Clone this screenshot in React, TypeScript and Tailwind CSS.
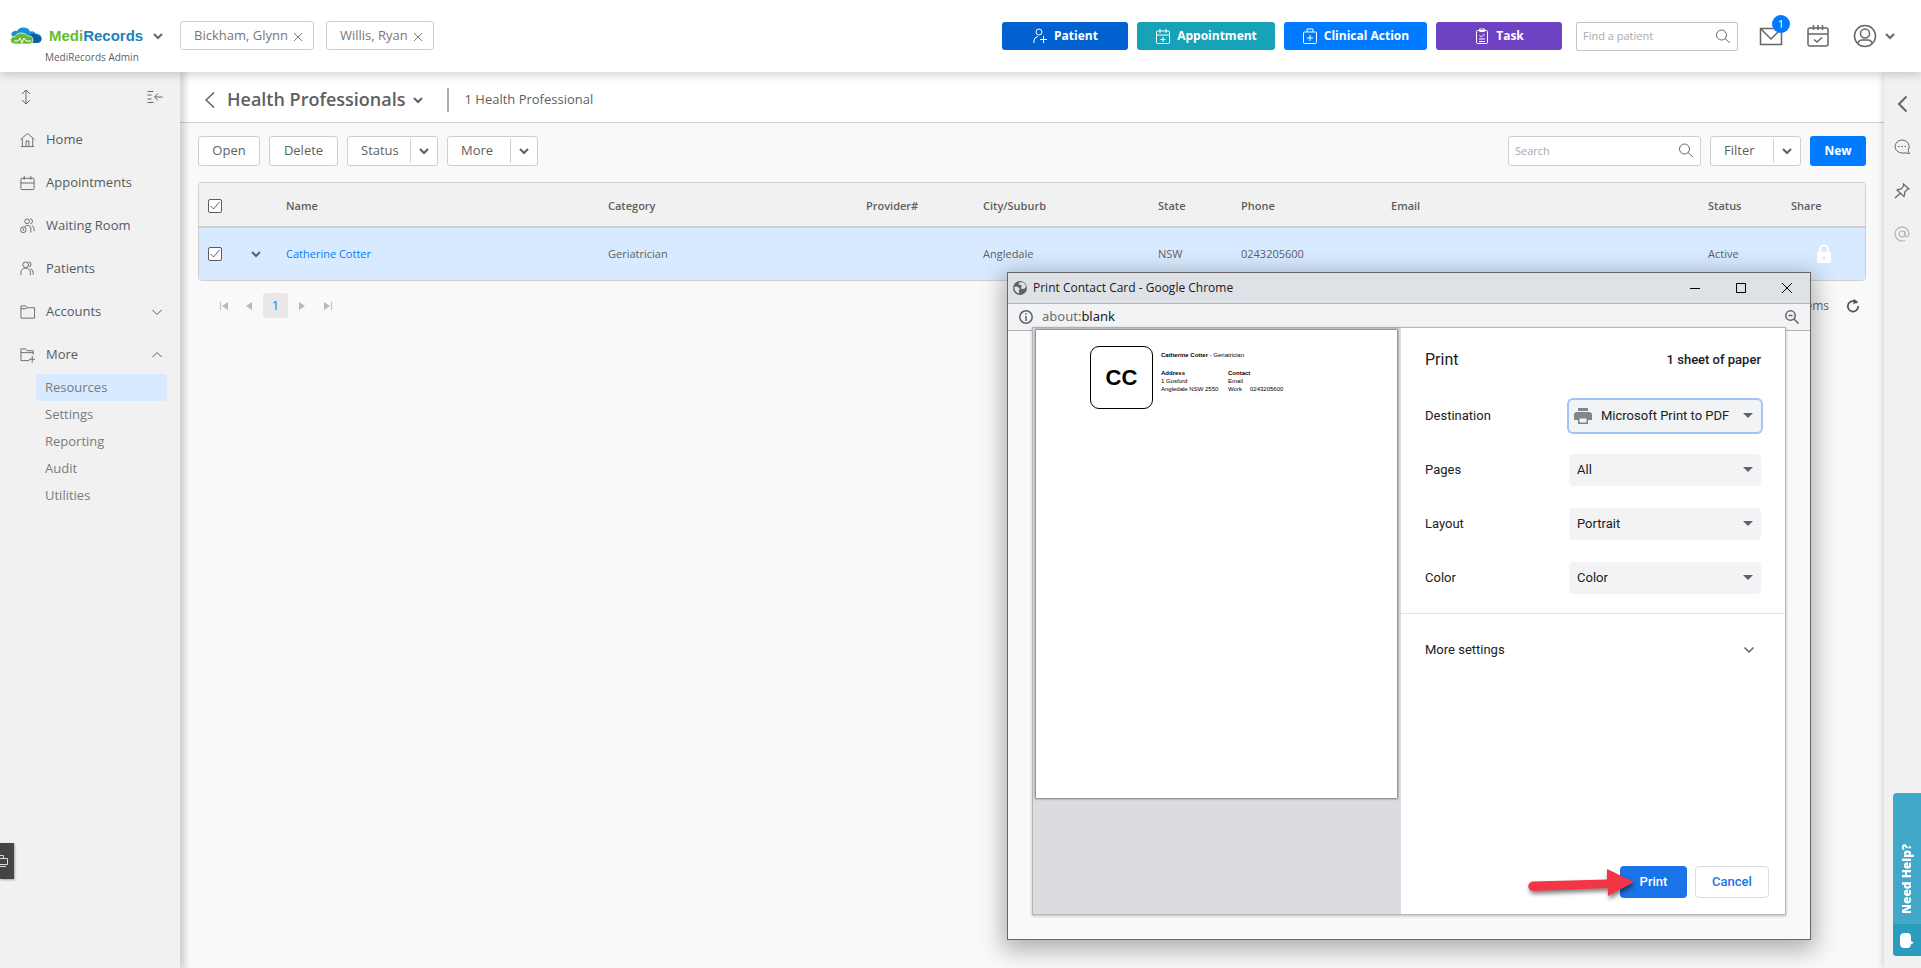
import { useState, type ReactNode } from 'react'

// Generic line icon, every path is drawn on the given square view box
function Icon({ size, box = 24, width = 1.5, className = '', children }: {
  size: number
  box?: number
  width?: number
  className?: string
  children: ReactNode
}) {
  return (
    <svg
      width={size}
      height={size}
      viewBox={`0 0 ${box} ${box}`}
      fill="none"
      stroke="currentColor"
      strokeWidth={width}
      className={`shrink-0 ${className}`}
      aria-hidden="true"
    >
      {children}
    </svg>
  )
}

// Thick chevron used in split buttons and menus
function Caret({ className = '' }: { className?: string }) {
  return (
    <Icon size={10} box={10} width={2} className={className}>
      <path d="M1 3l4 4 4-4" />
    </Icon>
  )
}

function SearchIcon({ className = '' }: { className?: string }) {
  return (
    <Icon size={16} box={16} width={1} className={className}>
      <circle cx="6.5" cy="6" r="5" />
      <path d="M10 9.500l5 4.500" />
    </Icon>
  )
}

const PEOPLE = (
  <>
    <circle cx="6" cy="4" r="3" />
    <path d="M1 15v-3a5 4.500 0 0 1 10 0v3" />
    <path d="M9 1a2.500 2.500 0 1 1 .5 5M11 8.500q3 .5 3 4v2" />
  </>
)

const NAV: { label: string; icon: ReactNode; open?: boolean }[] = [
  {
    label: 'Home',
    icon: <path d="M.5 8L8 1.500 15.500 8M2.500 7v8.500M13.500 7v8.500M1 15.500h14M6.500 15V9.500h3V15" />,
  },
  {
    label: 'Appointments',
    icon: (
      <>
        <rect x="1" y="3.500" width="14" height="12" rx="1" />
        <path d="M1 8.500h14M4.500 1v4M11.500 1v4" />
      </>
    ),
  },
  {
    label: 'Waiting Room',
    icon: (
      <>
        <circle cx="7.500" cy="3.500" r="2.500" />
        <path d="M10.500 1a2.500 2.500 0 0 1 .5 5M5 9q5-3 6.500 1.500v5M12.500 8q2.500 1 2.500 4v2" />
        <circle cx="3.500" cy="12.500" r="3" />
        <path d="M3.500 11v2l1 .5" />
      </>
    ),
  },
  { label: 'Patients', icon: PEOPLE },
  { label: 'Accounts', icon: <path d="M1 15V2h5l1.500 2H15.500v11zM1 5h6" />, open: false },
  { label: 'More', icon: <path d="M10 14.500H1V2h5l1.500 2H14v4M1 6h13M13 9.500v7M9.500 13H16" />, open: true },
]

const SUBNAV = ['Resources', 'Settings', 'Reporting', 'Audit', 'Utilities']

const ACTIONS = [
  {
    label: 'Patient',
    className: 'bg-[#0061cf] w-[126px]',
    icon: (
      <>
        <circle cx="7" cy="4" r="3" />
        <path d="M2 15v-2q0-4 4-4.500M11.500 8v7M8 11.500h7" />
      </>
    ),
  },
  {
    label: 'Appointment',
    className: 'bg-[#18a2b8] w-[138px]',
    icon: (
      <>
        <rect x="1.500" y="3" width="13" height="12.500" rx="1" />
        <path d="M1.500 7h13M5 1v4M11 1v4M8 9v5M5.500 11.500h5" />
      </>
    ),
  },
  {
    label: 'Clinical Action',
    className: 'bg-[#007bff] w-[143px]',
    icon: (
      <>
        <rect x="1.500" y="4" width="13" height="11.500" rx="1" />
        <path d="M5 4V1h6v3M8 7v6M5 10h6" />
      </>
    ),
  },
  {
    label: 'Task',
    className: 'bg-[#6f42c1] w-[126px]',
    icon: (
      <>
        <rect x="2.500" y="2.500" width="11" height="13" rx="1" />
        <path d="M5.500 1h5v2.500h-5zM5.500 7.500l2 1.500 3-3M5 11h6M5 13.500h6" />
      </>
    ),
  },
]

const COLUMNS = [
  { label: 'Name', className: 'w-[322px]' },
  { label: 'Category', className: 'w-[258px]' },
  { label: 'Provider#', className: 'w-[117px]' },
  { label: 'City/Suburb', className: 'w-[175px]' },
  { label: 'State', className: 'w-[83px]' },
  { label: 'Phone', className: 'w-[150px]' },
  { label: 'Email', className: '' },
  { label: 'Status', className: 'w-[83px]' },
  { label: 'Share', className: 'w-[82px]' },
]

const TOOL_BUTTON = 'flex h-[30px] items-center justify-center rounded-[3px] border border-[#cfcfcf] bg-white text-[13px] font-medium text-[#5f5f5f]'

function SplitButton({ label }: { label: string }) {
  return (
    <div className={TOOL_BUTTON}>
      <button className="w-[62px] pl-[13px] text-left">{label}</button>
      <button aria-label={`${label} options`} className="flex h-[24px] items-center border-l border-[#cfcfcf] px-2">
        <Caret />
      </button>
    </div>
  )
}

function Checkbox({ label }: { label: string }) {
  return (
    <span className="relative block size-[14px]">
      <input
        type="checkbox"
        defaultChecked
        aria-label={label}
        className="peer block size-[14px] appearance-none rounded-[2px] border border-[#5c5c5c] bg-white"
      />
      <Icon size={10} box={10} width={1} className="pointer-events-none absolute left-[2px] top-[2px] hidden text-[#666] peer-checked:block">
        <path d="M.5 5l3 3L9.500 1" />
      </Icon>
    </span>
  )
}

function Header() {
  return (
    <header className="relative z-20 flex h-[72px] shrink-0 items-start bg-white pl-[9px] pr-[26px] shadow-[0_2px_10px_rgba(0,0,0,0.2)]">
      <div className="w-[171px] shrink-0 pt-[25px]">
        <button className="flex h-[22px] items-center" aria-label="MediRecords menu">
          <svg width="34" height="20" viewBox="0 0 34 20" aria-hidden="true">
            <path d="M5 11Q1 10 3 6.500 5 4 8 5q2-4 7-3.500 5 .5 6 4 4-1 5.500 2 6 .5 6 5 0 4-5 4.500H12z" fill="#1592d2" />
            <path d="M20 9q5-3 8 0 5 1 4.500 4.500T27 17h-7z" fill="#0e5fa0" />
            <path d="M6 18q-5-.5-4.500-4.500Q2 10 6 10.500 8 6.500 13 7q4 .5 5.500 3 5-1 5.500 4 0 4-4 4z" fill="#65bb2e" stroke="#fff" strokeWidth=".7" />
            <path d="M5 15h4l2-3 2 5 2-5 2 3h5" fill="none" stroke="#fff" />
          </svg>
          <span className="ml-[6px] font-['Liberation_Sans',sans-serif] text-[15px] font-bold text-[#65bb2e]">
            Medi<span className="text-[#1b82bd]">Records</span>
          </span>
          <Caret className="ml-[10px] text-[#666]" />
        </button>
        <div className="pl-[36px] text-[10px] font-medium leading-[20px] text-[#5f5f5f]">MediRecords Admin</div>
      </div>

      {/* Open patient tabs */}
      <div className="flex gap-3 pt-[21px]">
        {['Bickham, Glynn', 'Willis, Ryan'].map(name => (
          <div key={name} className="flex h-[29px] items-center rounded-[3px] border border-[#cfcfcf] pl-[13px] pr-[10px] text-[13px] text-[#777]">
            {name}
            <button aria-label={`Close ${name}`} className="ml-[5px]">
              <Icon size={10} box={10} width={1} className="mt-[2px]">
                <path d="M1 1l8 8M9 1L1 9" />
              </Icon>
            </button>
          </div>
        ))}
      </div>

      <div className="ml-auto flex items-center gap-[9px] pt-[22px]">
        {ACTIONS.map(action => (
          <button
            key={action.label}
            className={`flex h-[28px] items-center justify-center gap-[6px] rounded-[3px] text-[12px] font-bold text-white ${action.className}`}
          >
            <Icon size={16} box={16} width={1}>{action.icon}</Icon>
            {action.label}
          </button>
        ))}
      </div>

      <div className="ml-[14px] mt-[22px] flex h-[29px] w-[162px] items-center rounded-[2px] border border-[#c4c4c4] px-[6px]">
        <input aria-label="Find a patient" placeholder="Find a patient" className="min-w-0 flex-1 text-[11px] outline-none placeholder:text-[#aaa]" />
        <SearchIcon className="text-[#666]" />
      </div>

      <div className="flex items-center pl-[21px] pt-[24px] text-[#666]">
        <button aria-label="Messages, 1 unread" className="relative">
          <Icon size={24} width={1.5}>
            <path d="M1.500 4.500h21v16h-21zM2 5l10 10L22 5" />
          </Icon>
          <span className="absolute left-[13px] top-[-9px] flex size-[18px] items-center justify-center rounded-full bg-[#007bff] text-[11px] text-white">1</span>
        </button>
        <button aria-label="Calendar" className="ml-[23px]">
          <Icon size={24} width={1.5}>
            <rect x="2" y="4" width="20" height="18" rx="2" />
            <path d="M2 10h20M7.500 1v5M12 1v5M16.500 1v5M8 15.500l3 2.500 5-4.500" />
          </Icon>
        </button>
        <button aria-label="Account" className="ml-[23px] flex items-center gap-2">
          <Icon size={24} width={1.5}>
            <circle cx="12" cy="12" r="10.500" />
            <circle cx="12" cy="9.500" r="4.500" />
            <path d="M5 19q1-3 4-3h6q3 0 4 3" />
          </Icon>
          <Caret />
        </button>
      </div>
    </header>
  )
}

function Sidebar() {
  return (
    <nav className="relative z-10 w-[180px] shrink-0 bg-[#f1f1f1] shadow-[3px_0_6px_2px_rgba(0,0,0,0.16)]">
      <div className="flex h-[46px] items-center justify-between pl-[18px] pr-[17px] pt-[4px] text-[#666]">
        <button aria-label="Resize">
          <Icon size={16} box={16} width={1}>
            <path d="M8 1.500v13M4 5l4-4 4 4M4 11l4 4 4-4" />
          </Icon>
        </button>
        <button aria-label="Collapse menu">
          <Icon size={16} box={16} width={1}>
            <path d="M.5 2.500h6M.5 6h4M.5 10h4M.5 13.500h6M15.500 8H8M11 4.500L7.500 8l3.500 3.500" />
          </Icon>
        </button>
      </div>

      {NAV.map(item => (
        <a key={item.label} href="#" className="flex h-[43px] items-center pl-[20px] pr-[18px] text-[13px] font-medium text-[#555b61]">
          <Icon size={16} box={17} width={1} className="mr-[10px] text-[#666]">{item.icon}</Icon>
          {item.label}
          {item.open !== undefined && (
            <Icon size={10} box={10} width={1} className="ml-auto">
              <path d={item.open ? 'M.5 7L5 2.500 9.500 7' : 'M.5 3L5 7.500 9.500 3'} />
            </Icon>
          )}
        </a>
      ))}

      <ul className="-mt-[2px] pl-[36px] pr-[13px]">
        {SUBNAV.map(label => (
          <li key={label}>
            <a
              href="#"
              className={`block h-[27px] rounded-[3px] pl-[9px] text-[13px] font-medium leading-[27px] text-[#7b7b7b] ${
                label === 'Resources' ? 'bg-[#d8eaff]' : ''
              }`}
            >
              {label}
            </a>
          </li>
        ))}
      </ul>

      {/* Dock tab on the window edge */}
      <button aria-label="Dock" className="absolute left-0 top-[771px] flex h-[36px] w-[14px] items-center bg-[#444] text-[#ddd] shadow-[1px_1px_2px_rgba(0,0,0,0.3)]">
        <svg width="9" height="14" viewBox="0 0 9 14" fill="none" stroke="currentColor" aria-hidden="true">
          <path d="M0 1.500h3.500V4M0 4.500h7.500v6H0M0 12.500h6" />
        </svg>
      </button>
    </nav>
  )
}

function Toolbar() {
  return (
    <div className="flex items-center pt-[13px] pl-[18px] pr-[18px]">
      <div className="flex gap-[9px]">
        <button className={`${TOOL_BUTTON} w-[62px]`}>Open</button>
        <button className={`${TOOL_BUTTON} w-[69px]`}>Delete</button>
        <SplitButton label="Status" />
        <SplitButton label="More" />
      </div>
      <div className="ml-auto flex gap-[9px]">
        <div className="flex h-[30px] w-[193px] items-center rounded-[3px] border border-[#cfcfcf] bg-white px-[6px]">
          <input aria-label="Search" placeholder="Search" className="min-w-0 flex-1 text-[11px] outline-none placeholder:text-[#aaa]" />
          <SearchIcon className="text-[#666]" />
        </div>
        <SplitButton label="Filter" />
        <button className="h-[30px] w-[56px] rounded-[3px] bg-[#007bff] text-[12px] font-bold text-white">New</button>
      </div>
    </div>
  )
}

function ProfessionalsTable() {
  return (
    <div className="mx-[18px] mt-[16px] overflow-hidden rounded-[4px] border border-[#cfcfcf]">
      <table className="w-full table-fixed border-collapse text-left text-[11px] text-[#5f5f5f]">
        <thead>
          <tr className="h-[44px] border-b-2 border-[#cfcfcf] bg-[#f1f1f1]">
            <th className="w-[43px] pl-[9px] pt-[3px]"><Checkbox label="Select all" /></th>
            <th className="w-[36px]" aria-label="Expand" />
            {COLUMNS.map(col => (
              <th key={col.label} className={`px-2 pt-[3px] font-semibold ${col.className}`}>{col.label}</th>
            ))}
          </tr>
        </thead>
        <tbody>
          <tr className="h-[53px] bg-[#d8eaff] font-medium">
            <td className="pl-[9px]"><Checkbox label="Select Catherine Cotter" /></td>
            <td className="pl-[9px]">
              <button aria-label="Row menu" className="block"><Caret /></button>
            </td>
            <td className="px-2"><a href="#" className="text-[#007bff]">Catherine Cotter</a></td>
            <td className="px-2">Geriatrician</td>
            <td />
            <td className="px-2">Angledale</td>
            <td className="px-2">NSW</td>
            <td className="px-2">0243205600</td>
            <td />
            <td className="px-2">Active</td>
            <td>
              <svg width="16" height="20" viewBox="0 0 16 20" className="mx-auto text-white" aria-label="Locked">
                <path d="M4 9V5.500a4 4 0 0 1 8 0V9" fill="none" stroke="currentColor" strokeWidth="2" />
                <path fillRule="evenodd" fill="currentColor" d="M2 8h12a1 1 0 0 1 1 1v9a1 1 0 0 1-1 1H2a1 1 0 0 1-1-1V9a1 1 0 0 1 1-1zm6 4a1.500 1.500 0 0 0-.7 2.700V16h1.400v-1.300A1.500 1.500 0 0 0 8 12z" />
              </svg>
            </td>
          </tr>
        </tbody>
      </table>
    </div>
  )
}

function Pager() {
  return (
    <div className="flex items-center pl-[35px] pr-[24px] pt-[12px] text-[#b9b9b9]">
      <button aria-label="First page" className="flex w-[17px] justify-center">
        <svg width="8" height="8" viewBox="0 0 8 8" fill="currentColor" aria-hidden="true"><path d="M0 0h1v8H0zM8 0v8L2 4z" /></svg>
      </button>
      <button aria-label="Previous page" className="ml-[8px] flex w-[18px] justify-center">
        <svg width="6" height="8" viewBox="0 0 6 8" fill="currentColor" aria-hidden="true"><path d="M6 0v8L0 4z" /></svg>
      </button>
      <button className="ml-[5px] size-[25px] rounded-[3px] bg-[#e9e7e8] text-[13px] text-[#1a73ff]">1</button>
      <button aria-label="Next page" className="ml-[5px] flex w-[18px] justify-center">
        <svg width="6" height="8" viewBox="0 0 6 8" fill="currentColor" aria-hidden="true"><path d="M0 0v8l6-4z" /></svg>
      </button>
      <button aria-label="Last page" className="ml-[8px] flex w-[17px] justify-center">
        <svg width="8" height="8" viewBox="0 0 8 8" fill="currentColor" aria-hidden="true"><path d="M7 0h1v8H7zM0 0v8l6-4z" /></svg>
      </button>
      <span className="ml-auto text-[12px] text-[#666]">1 - 1 of 1 items</span>
      <button aria-label="Refresh" className="ml-[17px] text-[#555]">
        <Icon size={14} box={14} width={1.7}>
          <path d="M11 4a5.200 5.200 0 1 0 1.200 3" />
          <path d="M7.500 0l4.500 2.500-4.500 3z" fill="currentColor" stroke="none" />
        </Icon>
      </button>
    </div>
  )
}

function RightRail() {
  return (
    <aside className="relative z-10 flex w-[37px] shrink-0 flex-col items-center bg-[#f1f1f1] pr-[2px] pt-[23px] text-[#666] shadow-[-2px_0_6px_rgba(0,0,0,0.14)]">
      <button aria-label="Expand panel" className="flex h-[18px] items-center">
        <Icon size={18} box={18} width={2}><path d="M13.500 1.500L6 9l7.500 7.500" /></Icon>
      </button>
      <button aria-label="Chat" className="mt-[26px]">
        <Icon size={16} box={16} width={1}>
          <path d="M15.500 14.500l-1.500-3q1.500-2 1-5A7 6.500 0 1 0 8 14h4z" />
          <path d="M4 7.500h1.500M7.200 7.500h1.500M10.500 7.500h1.500" />
        </Icon>
      </button>
      <button aria-label="Pinned" className="mt-[28px]">
        <Icon size={16} box={16} width={1.2}>
          <path d="M9.500 1l5.500 5-2 .5-2.500 3q.5 2-.5 4L3 7q2-1.200 4-.8L9.500 3zM6 10.500L1 15" />
        </Icon>
      </button>
      <button aria-label="Mentions" className="mt-[27px] text-[#b5b5b5]">
        <Icon size={16} box={16} width={1.2}>
          <circle cx="8" cy="8" r="3" />
          <path d="M11 5v4.500q0 1.500 1.500 1.500T15 8a7 7 0 1 0-4 6.300" />
        </Icon>
      </button>

      <button className="absolute right-0 top-[721px] flex h-[163px] w-[28px] flex-col overflow-hidden rounded-l-[4px] bg-[#41a8c9] text-white">
        <span className="flex w-full flex-1 rotate-180 items-center pb-[8px] text-[12px] font-extrabold [writing-mode:vertical-rl]">
          <span className="mt-[10px]">Need Help?</span>
        </span>
        <span className="flex h-[32px] w-full items-center justify-center bg-[#2c9cbc]">
          <svg width="14" height="15" viewBox="0 0 14 15" fill="currentColor" aria-hidden="true">
            <path d="M4.500 0h3Q11 0 11 4v4l3 2-3 1q0 4-3.500 4h-3Q0 15 0 10.500v-6Q0 0 4.500 0z" />
          </svg>
        </span>
      </button>
    </aside>
  )
}

function PrintField({ id, label, options, printer = false }: {
  id: string
  label: string
  options: string[]
  printer?: boolean
}) {
  return (
    <div className="flex h-[54px] items-center justify-between">
      <label htmlFor={id}>{label}</label>
      <div className="relative">
        <select
          id={id}
          className={`block h-[32px] w-[192px] appearance-none rounded-[4px] bg-[#f1f3f4] pr-[24px] outline-none ${
            printer ? 'pl-[32px] ring-2 ring-[#a1c3f8]' : 'pl-[8px]'
          }`}
        >
          {options.map(option => <option key={option}>{option}</option>)}
        </select>
        {printer && (
          <svg width="18" height="16" viewBox="0 0 18 16" className="pointer-events-none absolute left-[5px] top-[8px]" fill="#80868b" aria-hidden="true">
            <path d="M4 0h10v3H4zM3 4h12q3 0 3 3v5h-4V9H4v3H0V7q0-3 3-3z" />
            <path d="M4 9h10v7H4zm1.500 1.500v4h7v-4z" fillRule="evenodd" />
          </svg>
        )}
        <svg width="10" height="5" viewBox="0 0 10 5" className="pointer-events-none absolute right-[8px] top-[13px]" fill="#5f6368" aria-hidden="true">
          <path d="M0 0h10L5 5z" />
        </svg>
      </div>
    </div>
  )
}

// The sheet of paper shown in the preview pane
function ContactSheet() {
  return (
    <div className="ml-[3px] mr-[4px] mt-[2px] flex h-[468px] items-start bg-white pl-[54px] pt-[16px] font-['Liberation_Sans',Arial,sans-serif] text-[6px] leading-[8px] text-black shadow-[0_0_2px_1px_rgba(0,0,0,0.45)]">
      <div className="flex size-[63px] items-center justify-center rounded-[9px] border border-black text-[22px] font-bold">CC</div>
      <div className="ml-[8px] mt-[5px]">
        <p><b>Catherine Cotter</b> - Geriatrician</p>
        <div className="mt-[10px] flex">
          <div className="w-[67px] whitespace-nowrap">
            <p className="font-bold">Address</p>
            <p>1 Gosford</p>
            <p>Angledale NSW 2550</p>
          </div>
          <div>
            <p className="font-bold">Contact</p>
            <p>Email</p>
            <p className="flex"><span className="w-[22px]">Work</span>0243205600</p>
          </div>
        </div>
      </div>
    </div>
  )
}

function PrintWindow({ onClose }: { onClose: () => void }) {
  return (
    <div
      role="dialog"
      aria-label="Print Contact Card"
      className="absolute right-[110px] top-[272px] z-30 flex h-[668px] w-[804px] flex-col border border-[#666] bg-[#f9f9f9] shadow-[0_6px_22px_4px_rgba(0,0,0,0.3)]"
    >
      {/* Window title */}
      <div className="flex h-[31px] shrink-0 items-center border-b border-[#b0b3b5] bg-[#dee1e6] pl-[5px] text-[12px] text-[#1a1a1a]">
        <svg width="14" height="14" viewBox="0 0 14 14" className="mr-[6px]" aria-hidden="true">
          <circle cx="7" cy="7" r="7" fill="#5f6368" />
          <path d="M6 1.500q-1 2 1 2.500 2.500 0 1.500 2-1 1.500 1 2 2.500 0 3.500-2 0-3-2.500-4.500Q8 1 6 1.500zM1.200 6q3-1 4.300.5 1.500 1 1 2-1 .5-.5 1.500.5 1.500-.5 2.500Q1.500 11 1.200 6z" fill="#dee1e6" />
        </svg>
        <span className="font-['Open_Sans',sans-serif]">Print Contact Card - Google Chrome</span>
        <div className="ml-auto flex pr-[18px] text-black">
          <button aria-label="Minimize"><Icon size={10} box={10} width={1}><path d="M0 5.500h10" /></Icon></button>
          <button aria-label="Maximize" className="ml-[36px]"><Icon size={10} box={10} width={1}><path d="M.5.5h9v9h-9z" /></Icon></button>
          <button aria-label="Close" className="ml-[36px]" onClick={onClose}><Icon size={10} box={10} width={1}><path d="M0 0l10 10M10 0L0 10" /></Icon></button>
        </div>
      </div>

      {/* Address bar */}
      <div className="flex h-[27px] shrink-0 items-center border-b border-[#b0b3b5] bg-[#f1f3f4] pl-[11px] pr-[11px] font-['Noto_Sans',sans-serif] text-[13px] text-[#202124]">
        <Icon size={14} box={14} width={1.500} className="mr-[9px] text-[#5f6368]">
          <circle cx="7" cy="7" r="6.200" />
          <path d="M7 3.200v1.500M7 6v5" />
        </Icon>
        <span><span className="text-[#6b6f73]">about:</span>blank</span>
        <Icon size={14} box={14} width={1.500} className="ml-auto text-[#5f6368]">
          <circle cx="5.500" cy="5.500" r="4.700" />
          <path d="M9 9l4.500 4.500M3.500 5.500h4" />
        </Icon>
      </div>

      {/* Print dialog overlaps the address bar */}
      <div className="absolute bottom-[24px] left-[24px] right-[24px] top-[54px] flex border border-[#b3b5b8] bg-white font-[Roboto,sans-serif] text-[13px] text-[#202124] shadow-[0_1px_3px_rgba(0,0,0,0.25)]">
        <div className="flow-root w-[368px] shrink-0 bg-[#dadce0]">
          <ContactSheet />
        </div>
        <div className="flex flex-1 flex-col">
          <div className="flex h-[61px] items-center justify-between px-[24px] pt-[3px]">
            <h2 className="text-[16px]">Print</h2>
            <span className="font-medium">1 sheet of paper</span>
          </div>
          <div className="px-[24px]">
            <PrintField id="destination" label="Destination" options={['Microsoft Print to PDF']} printer />
            <PrintField id="pages" label="Pages" options={['All']} />
            <PrintField id="layout" label="Layout" options={['Portrait', 'Landscape']} />
            <PrintField id="color" label="Color" options={['Color', 'Black and white']} />
          </div>
          <button className="mt-[8px] flex h-[73px] items-center justify-between border-t border-[#e3e3e3] px-[24px] text-left">
            More settings
            <Icon size={10} box={10} width={1.500} className="mr-[7px] text-[#5f6368]"><path d="M.5 2.500L5 7l4.500-4.500" /></Icon>
          </button>
          <div className="mt-auto flex justify-end gap-[8px] p-[16px] font-medium">
            <button className="relative h-[32px] w-[67px] rounded-[4px] bg-[#1a73e8] text-white">
              Print
              <svg width="112" height="36" viewBox="0 0 112 36" className="pointer-events-none absolute right-[53px] top-0 drop-shadow-[1px_3px_2px_rgba(0,0,0,0.5)]" aria-hidden="true">
                <path d="M11 15.500l74-2V3l27 13-26 14V22l-75 3a4.700 4.700 0 0 1 0-9.500z" fill="#f23645" />
              </svg>
            </button>
            <button className="h-[32px] w-[74px] rounded-[4px] border border-[#dadce0] text-[#1a73e8]">Cancel</button>
          </div>
        </div>
      </div>
    </div>
  )
}

export default function App() {
  const [printing, setPrinting] = useState(true)

  return (
    <div className="relative flex min-h-screen flex-col overflow-hidden bg-[#f9f9f9] font-['Open_Sans',sans-serif]">
      <Header />
      <div className="flex flex-1">
        <Sidebar />
        <main className="min-w-0 flex-1">
          <div className="flex h-[51px] items-center border-b border-[#cfcfcf] bg-white pl-[25px] pt-[5px] text-[#5f5f5f]">
            <button aria-label="Back">
              <Icon size={16} box={16} width={1.500} className="mr-[6px]"><path d="M9 .5L1 8l8 7.500" /></Icon>
            </button>
            <h1 className="text-[18px] font-semibold">Health Professionals</h1>
            <button aria-label="Switch list" className="ml-[8px]"><Caret /></button>
            <span className="ml-[24px] h-[24px] w-[2px] bg-[#a9aeb8]" />
            <span className="ml-[15px] text-[13px] font-medium">1 Health Professional</span>
          </div>
          <Toolbar />
          <ProfessionalsTable />
          <Pager />
        </main>
        <RightRail />
      </div>
      {printing && <PrintWindow onClose={() => setPrinting(false)} />}
    </div>
  )
}
